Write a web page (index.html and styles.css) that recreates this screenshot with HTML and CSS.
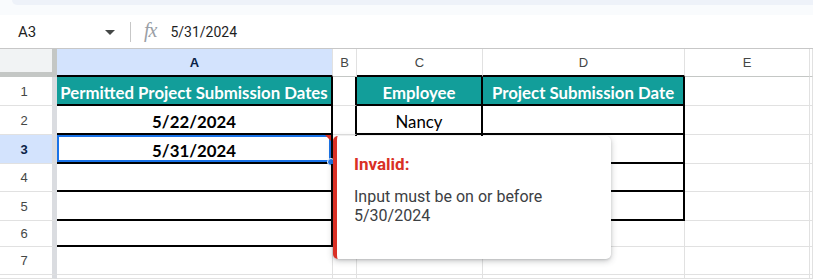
FILE: index.html
```html
<!DOCTYPE html>
<html lang="en">
<head>
    <meta charset="UTF-8">
    <title>Sheet - Data validation</title>
    <link rel="stylesheet" href="styles.css">
</head>
<body>
    <div class="Topbar"><div class="Topstrip"></div></div>
    <div class="Formulabar">
        <div class="Namebox">A3</div>
        <div class="Caret"></div>
        <div class="Divider"></div>
        <div class="Fx">fx</div>
        <div class="Formula">5/31/2024</div>
    </div>
    <div class="Sheet">
        <div class="Grid">
            <!-- column headers -->
            <div class="Corner"></div>
            <div class="Colhead Active blackB">A</div>
            <div class="Colhead">B</div>
            <div class="Colhead blackB">C</div>
            <div class="Colhead blackB">D</div>
            <div class="Colhead">E</div>
            <div class="Colhead"></div>

            <!-- row 1 -->
            <div class="Rowhead">1</div>
            <div class="Cell Head blackR blackB">Permitted Project Submission Dates</div>
            <div class="Cell blackR"></div>
            <div class="Cell Head blackR blackB">Employee</div>
            <div class="Cell Head blackR blackB">Project Submission Date</div>
            <div class="Cell"></div>
            <div class="Cell"></div>

            <!-- row 2 -->
            <div class="Rowhead">2</div>
            <div class="Cell Bold blackR blackB">5/22/2024</div>
            <div class="Cell blackR"></div>
            <div class="Cell blackR blackB">Nancy</div>
            <div class="Cell blackR blackB"></div>
            <div class="Cell"></div>
            <div class="Cell"></div>

            <!-- row 3 -->
            <div class="Rowhead Active">3</div>
            <div class="Cell Bold blackR blackB Selected">5/31/2024<span class="Flag"></span><span class="Handle"></span></div>
            <div class="Cell blackR"></div>
            <div class="Cell blackR blackB"></div>
            <div class="Cell blackR blackB"></div>
            <div class="Cell"></div>
            <div class="Cell"></div>

            <!-- row 4 -->
            <div class="Rowhead">4</div>
            <div class="Cell blackR blackB"></div>
            <div class="Cell blackR"></div>
            <div class="Cell blackR blackB"></div>
            <div class="Cell blackR blackB"></div>
            <div class="Cell"></div>
            <div class="Cell"></div>

            <!-- row 5 -->
            <div class="Rowhead">5</div>
            <div class="Cell blackR blackB"></div>
            <div class="Cell blackR"></div>
            <div class="Cell blackR blackB"></div>
            <div class="Cell blackR blackB"></div>
            <div class="Cell"></div>
            <div class="Cell"></div>

            <!-- row 6 -->
            <div class="Rowhead">6</div>
            <div class="Cell blackR blackB"></div>
            <div class="Cell"></div>
            <div class="Cell"></div>
            <div class="Cell"></div>
            <div class="Cell"></div>
            <div class="Cell"></div>

            <!-- row 7 -->
            <div class="Rowhead">7</div>
            <div class="Cell"></div>
            <div class="Cell"></div>
            <div class="Cell"></div>
            <div class="Cell"></div>
            <div class="Cell"></div>
            <div class="Cell"></div>

            <!-- row 8 (cut off) -->
            <div class="Rowhead"></div>
            <div class="Cell"></div>
            <div class="Cell"></div>
            <div class="Cell"></div>
            <div class="Cell"></div>
            <div class="Cell"></div>
            <div class="Cell"></div>
        </div>

        <div class="Tooltip">
            <div class="TipTitle">Invalid:</div>
            <div class="TipText">Input must be on or before<br>5/30/2024</div>
        </div>
    </div>
</body>
</html>
```

FILE: styles.css
```css
body, html {
    margin: 0;
    width: 813px;
    height: 280px;
    overflow: hidden;
    background-color: #fff;
    font-family: Roboto, Arial, sans-serif;
}

.Topbar {
    height: 15px;
    background-color: #f9fbfd;
}

.Topstrip {
    height: 5px;
    margin-left: 12px;
    background-color: #eef2f9;
    border-bottom-left-radius: 14px;
}

.Formulabar {
    display: flex;
    align-items: center;
    height: 34px;
    padding-top: 1px;
    box-sizing: border-box;
    border-bottom: 1px solid #c7c7c7;
    background-color: #fff;
    font-size: 14px;
    color: #1f1f1f;
}

.Namebox {
    width: 87px;
    padding-left: 18px;
    font-size: 15px;
}

.Caret {
    width: 0;
    height: 0;
    border-left: 5px solid transparent;
    border-right: 5px solid transparent;
    border-top: 5px solid #444746;
    margin-right: 15px;
}

.Divider {
    width: 1px;
    height: 20px;
    background-color: #c7c7c7;
    margin-right: 13px;
}

.Fx {
    font-family: "Liberation Serif", serif;
    font-style: italic;
    font-size: 20px;
    color: #9aa0a6;
    margin-right: 14px;
    margin-top: -3px;
    letter-spacing: -1px;
}

.Formula {
    font-size: 14px;
}

.Sheet {
    position: relative;
}

.Grid {
    display: grid;
    grid-template-columns: 57px 276px 24px 126px 202px 125px 1fr;
    grid-template-rows: 28px 29px 29px 29px 28px 29px 26px 28px 4px;
}

.Corner {
    background-color: #f1f3f4;
    border-right: 5px solid #c4c7c5;
    border-bottom: 5px solid #c4c7c5;
}

.Colhead {
    display: flex;
    align-items: center;
    justify-content: center;
    border-right: 1px solid #e1e1e1;
    border-bottom: 1px solid #c4c7c5;
    font-family: Arial, "Liberation Sans", sans-serif;
    font-size: 13px;
    color: #444746;
}

.Colhead.Active {
    background-color: #d3e3fd;
    color: #0b1f48;
    font-weight: bold;
}

.Rowhead {
    display: flex;
    align-items: center;
    justify-content: center;
    padding-right: 4px;
    border-right: 5px solid #dadce0;
    border-bottom: 1px solid #e1e1e1;
    font-family: Arial, "Liberation Sans", sans-serif;
    font-size: 13px;
    color: #444746;
}

.Rowhead.Active {
    background-color: #d3e3fd;
    color: #0b1f48;
    font-weight: bold;
}

.Cell {
    position: relative;
    display: flex;
    align-items: center;
    justify-content: center;
    padding-top: 3px;
    border-right: 1px solid #e1e1e1;
    border-bottom: 1px solid #e1e1e1;
    font-family: Lato, "Open Sans", sans-serif;
    font-size: 16.8px;
    color: #000;
}

.Colhead.blackB,
.Cell.blackB {
    border-bottom: 2px solid #000;
}

.Cell.blackR {
    border-right: 2px solid #000;
}

.Cell.Head {
    background-color: #129e9a;
    color: #fff;
    font-weight: bold;
}

.Cell.Bold {
    font-weight: bold;
}

.Cell.Selected {
    box-shadow: inset 0 0 0 2px #1a73e8;
}

.Flag {
    position: absolute;
    top: 0;
    right: 0;
    width: 0;
    height: 0;
    border-top: 6px solid #d93025;
    border-left: 6px solid transparent;
}

.Handle {
    position: absolute;
    right: -4px;
    bottom: -4px;
    width: 6px;
    height: 6px;
    border-radius: 50%;
    background-color: #1a73e8;
    border: 1px solid #fff;
}

.Tooltip {
    position: absolute;
    left: 333px;
    top: 87px;
    width: 278px;
    height: 123px;
    box-sizing: border-box;
    padding: 18px 16px 0 17px;
    background-color: #fff;
    border-left: 4px solid #d93025;
    border-radius: 5px;
    box-shadow: 0 2px 6px rgba(60, 64, 67, 0.3), 0 1px 2px rgba(60, 64, 67, 0.15);
}

.TipTitle {
    font-size: 17px;
    font-weight: bold;
    color: #d93025;
    margin-bottom: 13px;
}

.TipText {
    font-size: 16px;
    line-height: 19px;
    color: #3c4043;
}
```
